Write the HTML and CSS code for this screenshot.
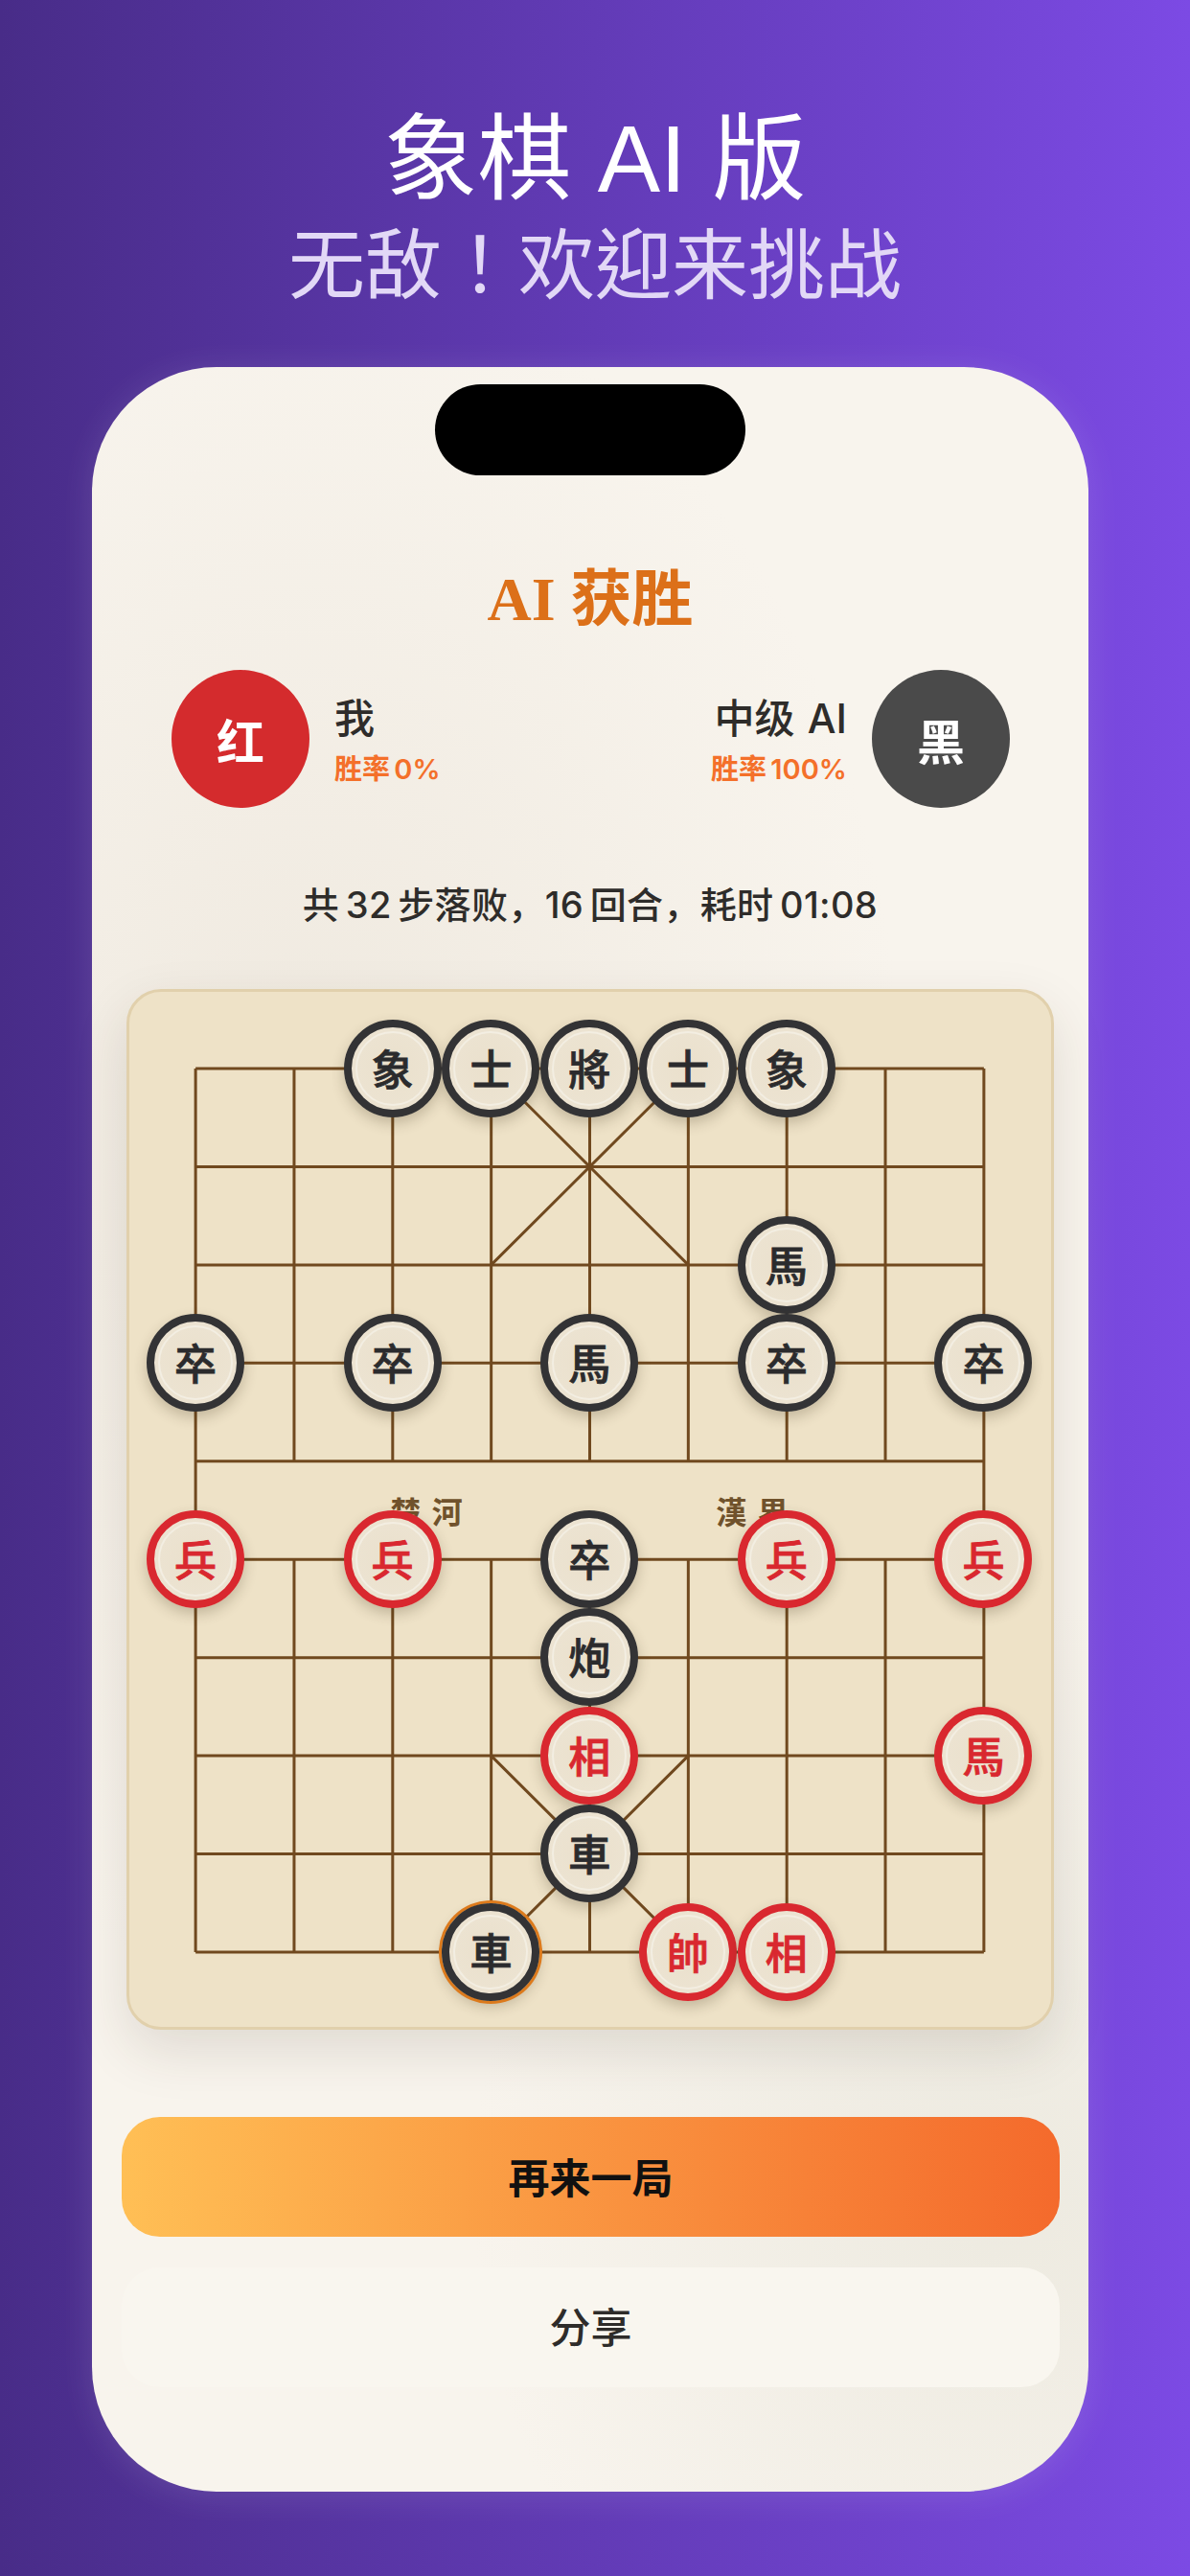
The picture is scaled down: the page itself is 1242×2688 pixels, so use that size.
FILE: index.html
```html
<!DOCTYPE html>
<html lang="zh-CN">
<head>
<meta charset="utf-8">
<title>象棋 AI 版</title>
<link rel="stylesheet" href="styles.css">
</head>
<body>
<header class="promo">
  <h1 class="promo-title">象棋 AI 版</h1>
  <p class="promo-sub" lang="zh-Hant">无敌！欢迎来挑战</p>
</header>
<main class="phone">
  <div class="island"></div>
  <h2 class="result">AI 获胜</h2>
  <section class="players">
    <div class="player">
      <div class="avatar avatar-red">红</div>
      <div class="info">
        <div class="name">我</div>
        <div class="rate">胜率 0%</div>
      </div>
    </div>
    <div class="player player-right">
      <div class="info info-right">
        <div class="name">中级 AI</div>
        <div class="rate">胜率 100%</div>
      </div>
      <div class="avatar avatar-black">黑</div>
    </div>
  </section>
  <p class="summary">共 32 步落败，16 回合，耗时 01:08</p>
  <section class="board">
    <div class="field">
      <svg class="grid" width="823" height="922" viewBox="0 0 822.4 921.6">
        <path d="M0 0H822.4M0 102.4H822.4M0 204.8H822.4M0 307.2H822.4M0 409.6H822.4M0 512H822.4M0 614.4H822.4M0 716.8H822.4M0 819.2H822.4M0 921.6H822.4"/>
        <path d="M0 0V921.6M822.4 0V921.6M102.8 0V409.6M205.6 0V409.6M308.4 0V409.6M411.2 0V409.6M514 0V409.6M616.8 0V409.6M719.6 0V409.6M102.8 512V921.6M205.6 512V921.6M308.4 512V921.6M411.2 512V921.6M514 512V921.6M616.8 512V921.6M719.6 512V921.6"/>
        <path d="M308.4 0L514 204.8M514 0L308.4 204.8M308.4 716.8L514 921.6M514 716.8L308.4 921.6"/>
      </svg>
      <span class="river river-left">楚 河</span>
      <span class="river river-right">漢 界</span>

      <div class="piece black" style="--c:2;--r:0">象</div>
      <div class="piece black" style="--c:3;--r:0">士</div>
      <div class="piece black" style="--c:4;--r:0">將</div>
      <div class="piece black" style="--c:5;--r:0">士</div>
      <div class="piece black" style="--c:6;--r:0">象</div>
      <div class="piece black" style="--c:6;--r:2">馬</div>
      <div class="piece black" style="--c:0;--r:3">卒</div>
      <div class="piece black" style="--c:2;--r:3">卒</div>
      <div class="piece black" style="--c:4;--r:3">馬</div>
      <div class="piece black" style="--c:6;--r:3">卒</div>
      <div class="piece black" style="--c:8;--r:3">卒</div>
      <div class="piece red" style="--c:0;--r:5">兵</div>
      <div class="piece red" style="--c:2;--r:5">兵</div>
      <div class="piece black" style="--c:4;--r:5">卒</div>
      <div class="piece red" style="--c:6;--r:5">兵</div>
      <div class="piece red" style="--c:8;--r:5">兵</div>
      <div class="piece black" style="--c:4;--r:6">炮</div>
      <div class="piece red" style="--c:4;--r:7">相</div>
      <div class="piece red" style="--c:8;--r:7">馬</div>
      <div class="piece black" style="--c:4;--r:8">車</div>
      <div class="piece black last" style="--c:3;--r:9">車</div>
      <div class="piece red" style="--c:5;--r:9">帥</div>
      <div class="piece red" style="--c:6;--r:9">相</div>
    </div>
  </section>
  <div class="actions">
    <button class="btn btn-primary">再来一局</button>
    <button class="btn btn-secondary">分享</button>
  </div>
</main>
</body>
</html>
```
FILE: styles.css
```css
* { box-sizing: border-box; margin: 0; padding: 0; }

html, body { width: 1242px; height: 2688px; overflow: hidden; }

body {
  background: linear-gradient(90deg, #482c88 0%, #7c4ae4 100%);
  font-family: Inter, "Noto Sans CJK SC", sans-serif;
  color: #2e2c2a;
}

.promo {
  height: 383px;
  padding-top: 102px;
  text-align: center;
}

.promo-title {
  font-size: 98px;
  line-height: 128px;
  font-weight: 400;
  color: #fff;
  font-family: "Liberation Sans", "Noto Sans CJK SC", sans-serif;
}

.promo-sub {
  font-size: 80px;
  line-height: 90px;
  font-weight: 400;
  color: #e2d8f6;
  font-family: "Noto Sans CJK TC", "Noto Sans CJK SC", sans-serif;
  margin-top: -5px;
}

.phone {
  width: 1040px;
  height: 2217px;
  margin-left: 96px;
  padding-top: 18px;
  border-radius: 130px;
  background:
    radial-gradient(ellipse 620px 900px at 22% 36%, #efe9df 0%, rgba(239, 233, 223, 0) 100%),
    radial-gradient(ellipse 560px 620px at 92% 86%, #edeae0 0%, rgba(237, 234, 224, 0) 100%),
    #f8f4ed;
  box-shadow: 0 4px 36px rgba(255, 255, 255, 0.12);
}

.island {
  width: 324px;
  height: 95px;
  margin: 0 auto;
  border-radius: 48px;
  background: #000;
}

.result {
  margin-top: 88px;
  height: 84px;
  text-align: center;
  font-family: "Liberation Serif", "Noto Sans CJK SC", serif;
  font-size: 64px;
  line-height: 84px;
  font-weight: 700;
  color: #dc7019;
}

.players {
  display: flex;
  justify-content: space-between;
  margin-top: 31px;
  padding: 0 82px 0 83px;
}

.player { display: flex; align-items: center; gap: 26px; }

.avatar {
  width: 144px;
  height: 144px;
  border-radius: 50%;
  display: flex;
  align-items: center;
  justify-content: center;
  font-size: 50px;
  font-weight: 700;
  color: #fff;
}

.avatar-red { background: #d42b2d; }
.avatar-black { background: #4a4a4a; }

.info { display: flex; flex-direction: column; gap: 8px; margin-top: 3px; }
.info-right { align-items: flex-end; }

.name { font-size: 42px; line-height: 52px; font-weight: 500; word-spacing: 2px; color: #2e2c2a; }
.rate { font-size: 29px; line-height: 38px; font-weight: 600; word-spacing: -3px; color: #f4702a; }

.summary {
  margin-top: 71px;
  height: 60px;
  text-align: center;
  font-size: 38px;
  line-height: 60px;
  font-weight: 500;
  word-spacing: -4px;
  letter-spacing: 0.37px;
  color: #2e2c2a;
}

.board {
  width: 968px;
  height: 1086px;
  margin: 58px 0 0 36px;
  padding: 80px 0 0 69px;
  border: 3px solid #e1d0ac;
  border-radius: 36px;
  background: #eee2c7;
  box-shadow: 0 22px 56px rgba(60, 50, 30, 0.13);
}

.field { position: relative; width: 823px; height: 922px; }

.grid { display: block; overflow: visible; fill: none; stroke: #70491f; stroke-width: 3; }

.river {
  position: absolute;
  top: 444px;
  width: 120px;
  margin-left: -60px;
  text-align: center;
  font-size: 32px;
  line-height: 40px;
  font-weight: 700;
  word-spacing: 4px;
  color: #70522c;
}

.river-left { left: 241px; }
.river-right { left: 581px; }

.piece {
  position: absolute;
  left: calc(var(--c) * 102.8px - 51px);
  top: calc(var(--r) * 102.4px - 51px);
  width: 102px;
  height: 102px;
  padding-bottom: 2px;
  border-radius: 50%;
  border: 8px solid;
  display: flex;
  align-items: center;
  justify-content: center;
  font-size: 44px;
  line-height: 1;
  font-weight: 500;
  font-family: "Noto Sans CJK SC", sans-serif;
  -webkit-text-stroke: 0.8px currentColor;
  background: radial-gradient(circle, #eae0cc 0%, #ece3d1 62%, #eee5d4 100%);
  box-shadow: 0 6px 14px rgba(60, 45, 20, 0.24);
}

.piece::after {
  content: "";
  position: absolute;
  inset: 4px;
  border-radius: 50%;
  border: 2px solid #f3eee2;
}

.black { border-color: #333335; color: #2b2b2d; }
.red { border-color: #d9282f; color: #d9282f; }
.last { box-shadow: 0 0 0 3px #dc7a1c, 0 6px 14px rgba(60, 45, 20, 0.24); }

.actions {
  display: flex;
  flex-direction: column;
  gap: 32px;
  margin: 91px 0 0 31px;
  width: 979px;
}

.btn {
  display: block;
  height: 125px;
  padding-bottom: 3px;
  border: 0;
  border-radius: 40px;
  font-family: Inter, "Noto Sans CJK SC", sans-serif;
  font-size: 43px;
  color: #2e2c2a;
}

.btn-primary {
  background: linear-gradient(90deg, #ffbf55 0%, #f46a2c 100%);
  color: #111;
  font-weight: 700;
}

.btn-secondary {
  padding-bottom: 5px;
  background: #f9f6ef;
  font-weight: 500;
}
```
